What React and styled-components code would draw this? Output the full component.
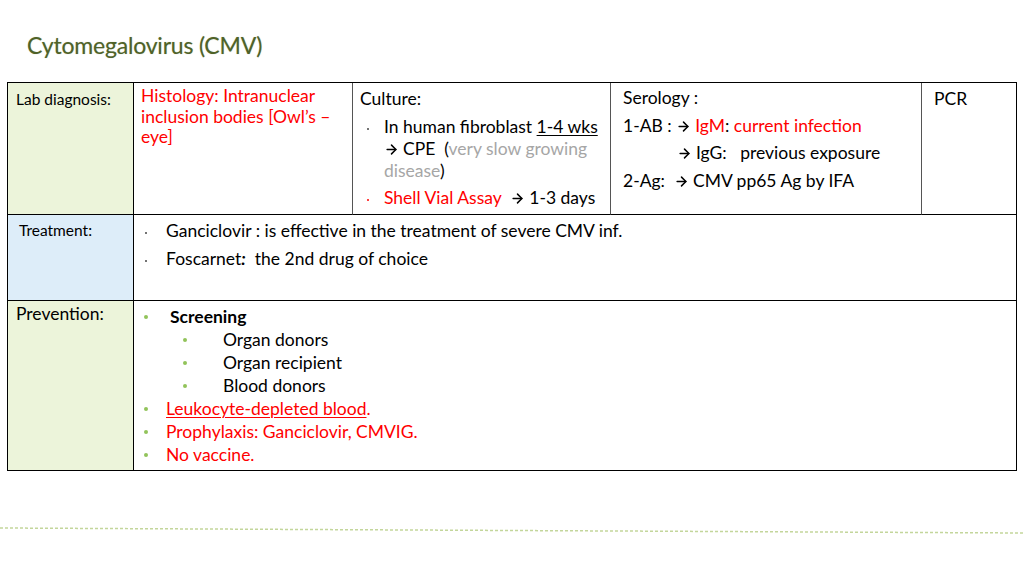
import React from 'react';
import styled, { createGlobalStyle } from 'styled-components';
import { ArrowRight } from 'lucide-react';

const GlobalStyle = createGlobalStyle`
  html, body {
    margin: 0;
    padding: 0;
    background: #ffffff;
  }
  body {
    font-family: Lato, "Open Sans", sans-serif;
    color: #000;
  }
`;

const Slide = styled.div`
  width: 1024px;
  height: 576px;
  overflow: hidden;
  padding: 28px 0 0 7px;
  box-sizing: border-box;
`;

const Title = styled.h1`
  margin: 0 0 0 20px;
  font-family: Lato, sans-serif;
  font-weight: 400;
  font-size: 23px;
  line-height: 34px;
  color: #4f6228;
  letter-spacing: -0.2px;
  text-shadow: 0 0 1px rgba(79, 98, 40, 0.4);
`;

const Table = styled.div`
  margin-top: 20px;
  width: 1010px;
  display: grid;
  grid-template-columns: 126px 219px 258px 311px 1fr;
  grid-template-rows: 132px 86px 169px;
  border: 1.5px solid #000;
  box-sizing: border-box;
  overflow: hidden;
`;

const Cell = styled.div`
  grid-column: ${p => p.$span || 'auto'};
  background: ${p => p.$bg || '#fff'};
  border-right: ${p => (p.$last ? 'none' : `1px solid ${p.$soft ? '#555' : '#000'}`)};
  border-bottom: ${p => (p.$bottom ? 'none' : '1.5px solid #000')};
  padding: ${p => p.$pad || '4px 8px'};
  box-sizing: border-box;
  font-size: 17.5px;
  line-height: 22px;
  min-height: 0;
  overflow: hidden;
`;

const Label = styled.div`
  font-size: ${p => p.$size || '15.5px'};
  line-height: 20px;
`;

const Red = styled.span`
  color: #ff0000;
`;

const Black = styled.span`
  color: #000;
`;

const Grey = styled.span`
  color: #a6a6a6;
`;

const U = styled.span`
  text-decoration: underline;
  text-decoration-thickness: 1px;
  text-underline-offset: 2px;
`;

const NoWrap = styled.span`
  white-space: nowrap;
`;

const Para = styled.div`
  line-height: ${p => p.$lh || '22px'};
  padding-left: ${p => p.$indent || '0px'};
  color: ${p => p.$color || 'inherit'};
  white-space: nowrap;
`;

const Wrap = styled.div`
  line-height: ${p => p.$lh || '22px'};
  color: ${p => p.$color || 'inherit'};
`;

const List = styled.ul`
  list-style: none;
  margin: 0;
  padding: 0;
`;

const Item = styled.li`
  position: relative;
  padding-left: ${p => p.$text || '24px'};
  margin-top: ${p => p.$gap || '0px'};
  line-height: ${p => p.$lh || '22px'};
  color: ${p => p.$color || 'inherit'};
  font-weight: ${p => (p.$bold ? 700 : 400)};

  &::before {
    content: '';
    position: absolute;
    left: ${p => p.$dot || '6px'};
    top: ${p => (p.$green ? '10px' : '12px')};
    width: ${p => (p.$green ? '4px' : '2px')};
    height: ${p => (p.$green ? '4px' : '2px')};
    border-radius: 50%;
    background: ${p => (p.$green ? '#92c35a' : p.$dotColor || '#444')};
  }
`;

const ArrowBox = styled.span`
  display: inline-block;
  color: #000;
  margin-right: 4px;
  vertical-align: -2px;
  line-height: 0;
`;

const Arrow = () => (
  <ArrowBox>
    <ArrowRight size={15} strokeWidth={2.4} />
  </ArrowBox>
);

const Footer = styled.svg`
  display: block;
  margin: 55px 0 0 -7px;
`;

export default function App() {
  return (
    <>
      <GlobalStyle />
      <Slide>
        <Title>Cytomegalovirus (CMV)</Title>
        <Table>
          <Cell $bg="#ecf4da" $pad="6px 8px">
            <Label>Lab diagnosis:</Label>
          </Cell>
          <Cell $soft $pad="3px 7px">
            <Wrap $lh="20.5px" $color="#ff0000">
              Histology: Intranuclear inclusion bodies [Owl’s – eye]
            </Wrap>
          </Cell>
          <Cell $soft $pad="5px 4px 0 7px">
            <Para>Culture:</Para>
            <List>
              <Item $gap="6px" $dot="7px">
                <NoWrap>In human fibroblast <U>1-4 wks</U></NoWrap>
                <br />
                <Arrow />CPE &nbsp;(<Grey>very slow growing disease</Grey>)
              </Item>
              <Item $gap="5px" $dot="7px" $color="#ff0000" $dotColor="#ff0000">
                <NoWrap>
                  Shell Vial Assay &nbsp;<Black><Arrow />1-3 days</Black>
                </NoWrap>
              </Item>
            </List>
          </Cell>
          <Cell $soft $pad="1px 8px 0 12px">
            <Para $lh="27.7px">Serology :</Para>
            <Para $lh="27.7px">
              1-AB : <Arrow /><Red>IgM</Red>: <Red>current infection</Red>
            </Para>
            <Para $lh="27.7px" $indent="54px">
              <Arrow />IgG: &nbsp; previous exposure
            </Para>
            <Para $lh="27.7px">
              2-Ag: &nbsp;<Arrow />CMV pp65 Ag by IFA
            </Para>
          </Cell>
          <Cell $last $pad="5px 12px">
            <Para>PCR</Para>
          </Cell>

          <Cell $bg="#ddedf9" $pad="5px 11px">
            <Label>Treatment:</Label>
          </Cell>
          <Cell $span="2 / 6" $last $pad="5px 8px 0 8px">
            <List>
              <Item $dot="3px">
                Ganciclovir : is effective in the treatment of severe CMV inf.
              </Item>
              <Item $dot="3px" $gap="6px">
                Foscarnet<b><i>:</i></b> &nbsp;the 2nd drug of choice
              </Item>
            </List>
          </Cell>

          <Cell $bg="#ecf4da" $bottom $pad="3px 8px">
            <Label $size="17.5px">Prevention:</Label>
          </Cell>
          <Cell $span="2 / 6" $last $bottom $pad="4px 8px 0">
            <List>
              <Item $green $dot="2px" $text="28px" $lh="23px" $bold>Screening</Item>
              <Item $green $dot="41px" $text="81px" $lh="23px">Organ donors</Item>
              <Item $green $dot="41px" $text="81px" $lh="23px">Organ recipient</Item>
              <Item $green $dot="41px" $text="81px" $lh="23px">Blood donors</Item>
              <Item $green $dot="2px" $lh="23px" $color="#ff0000">
                <U>Leukocyte-depleted blood</U>.
              </Item>
              <Item $green $dot="2px" $lh="23px" $color="#ff0000">
                Prophylaxis: Ganciclovir, CMVIG.
              </Item>
              <Item $green $dot="2px" $lh="23px" $color="#ff0000">
                No vaccine.
              </Item>
            </List>
          </Cell>
        </Table>
        <Footer width="1024" height="12" viewBox="0 0 1024 12">
          <line
            x1="0"
            y1="2"
            x2="1024"
            y2="7"
            stroke="#c3d69b"
            strokeWidth="1.5"
            strokeDasharray="3 2"
          />
        </Footer>
      </Slide>
    </>
  );
}
